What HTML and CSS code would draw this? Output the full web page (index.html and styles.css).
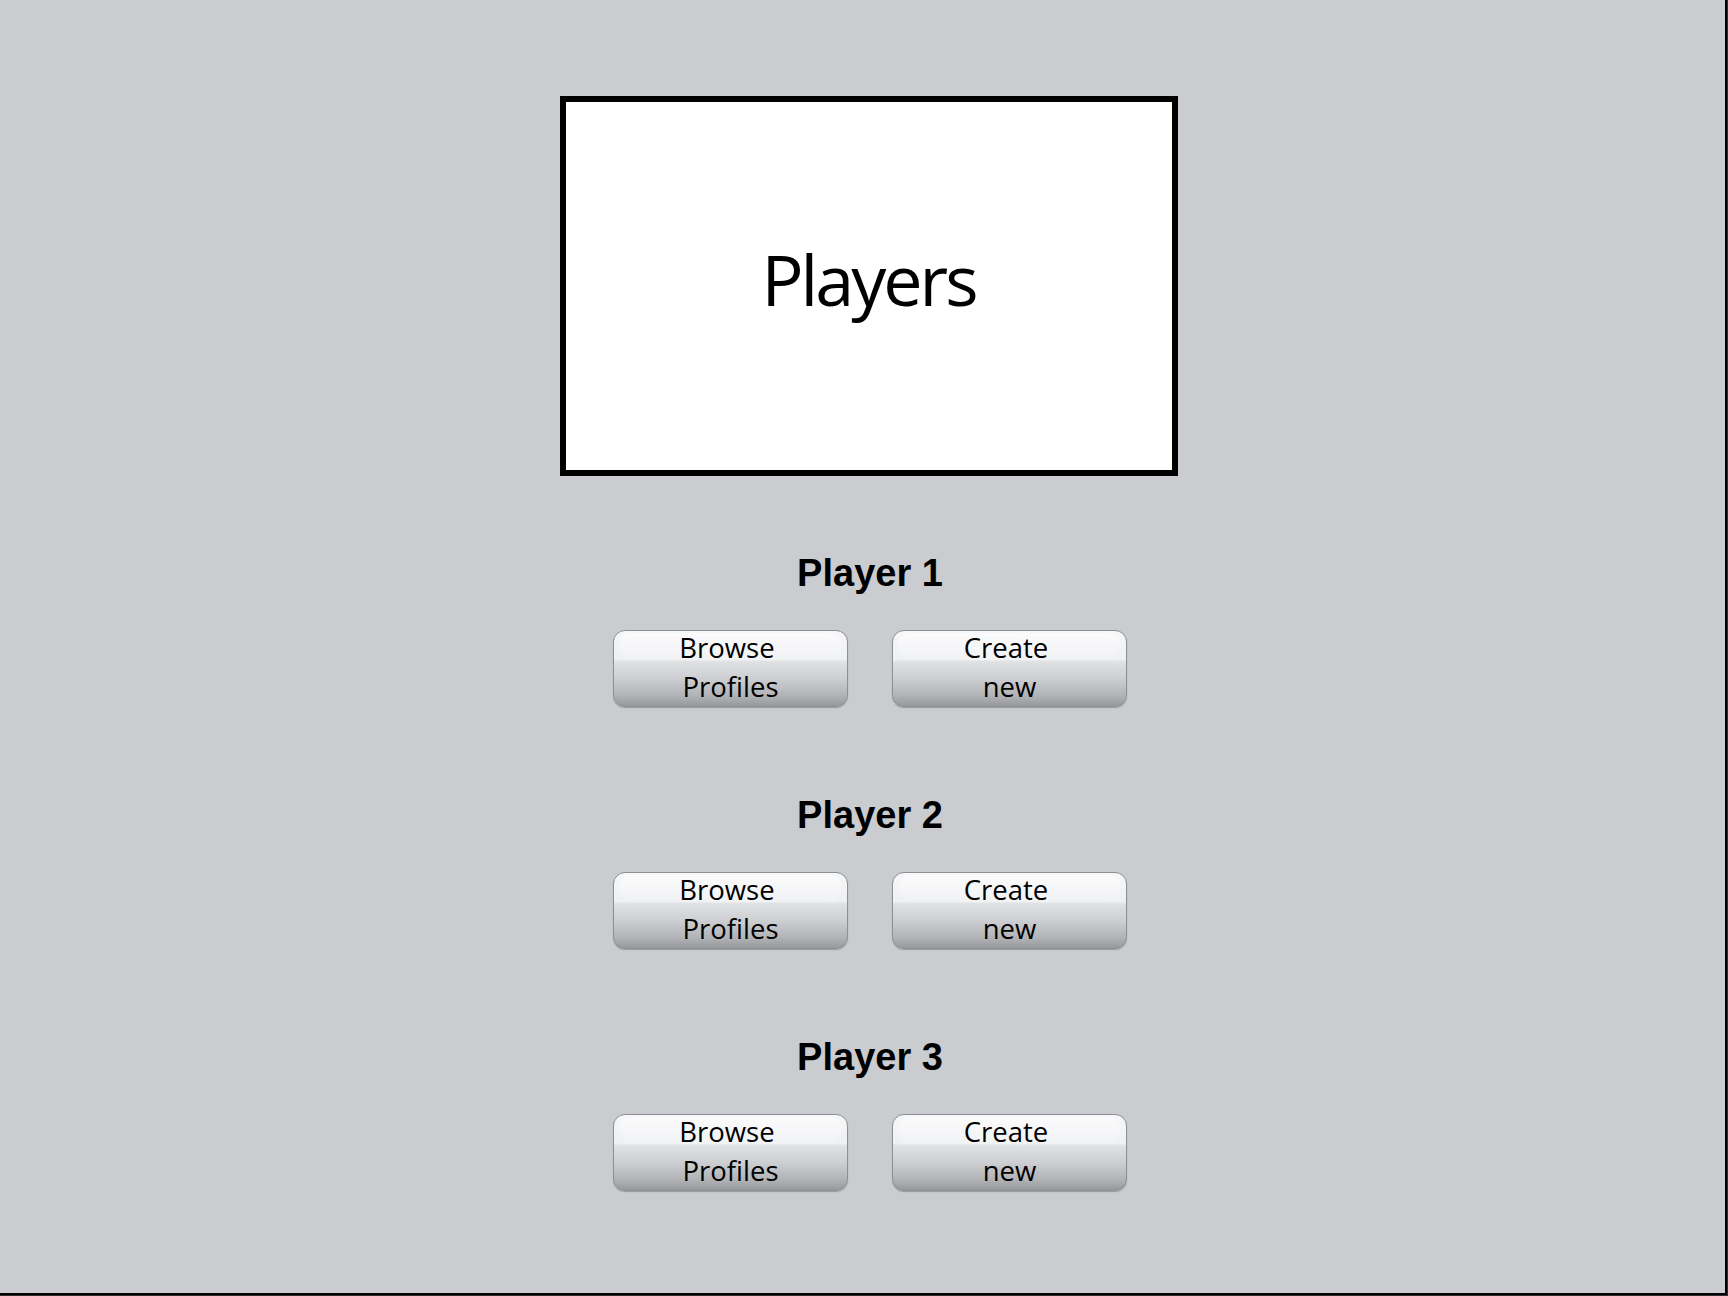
FILE: index.html
```html
<!DOCTYPE html>
<html lang="en">
<head>
<meta charset="utf-8">
<title>Players</title>
<link rel="stylesheet" href="styles.css">
</head>
<body>
<div class="page">
  <div class="title-box"><h1 class="title">Players</h1></div>
  <section class="player">
    <h2 class="player-name">Player 1</h2>
    <div class="actions">
      <button class="gloss-btn"><span class="btn-line">Browse&nbsp;</span><span class="btn-line">Profiles</span></button>
      <button class="gloss-btn"><span class="btn-line">Create&nbsp;</span><span class="btn-line">new</span></button>
    </div>
  </section>
  <section class="player">
    <h2 class="player-name">Player 2</h2>
    <div class="actions">
      <button class="gloss-btn"><span class="btn-line">Browse&nbsp;</span><span class="btn-line">Profiles</span></button>
      <button class="gloss-btn"><span class="btn-line">Create&nbsp;</span><span class="btn-line">new</span></button>
    </div>
  </section>
  <section class="player">
    <h2 class="player-name">Player 3</h2>
    <div class="actions">
      <button class="gloss-btn"><span class="btn-line">Browse&nbsp;</span><span class="btn-line">Profiles</span></button>
      <button class="gloss-btn"><span class="btn-line">Create&nbsp;</span><span class="btn-line">new</span></button>
    </div>
  </section>
</div>
</body>
</html>
```
FILE: styles.css
```css
html {
  margin: 0;
  background: #2e2e2e;
}
body {
  margin: 0;
  width: 1728px;
  height: 1296px;
  overflow: hidden;
}
.page {
  box-sizing: border-box;
  width: 1727px;
  height: 1295px;
  background: #cbcccf;
  border-right: 2px solid #000;
  border-bottom: 2px solid #000;
  padding: 96px 0 0 15px;
  display: flex;
  flex-direction: column;
  align-items: center;
}
.title-box {
  box-sizing: border-box;
  width: 618px;
  height: 380px;
  border: 6px solid #000;
  background: #fff;
  display: flex;
  align-items: center;
  justify-content: center;
  margin-left: -3px;
}
.title {
  margin: 0 0 14px 0;
  font-family: "Open Sans", sans-serif;
  font-weight: 400;
  font-size: 70px;
  line-height: 1;
  letter-spacing: -3px;
  color: #000;
}
.player {
  display: flex;
  flex-direction: column;
  align-items: center;
  margin-top: 79px;
}
.player + .player {
  margin-top: 90px;
}
.player-name {
  margin: 0;
  font-family: "Liberation Sans", Arial, sans-serif;
  font-weight: 700;
  font-size: 38px;
  line-height: 37px;
  color: #000;
}
.actions {
  display: flex;
  gap: 44px;
  margin-top: 38px;
}
.gloss-btn {
  position: relative;
  box-sizing: border-box;
  width: 235px;
  height: 77px;
  padding: 0;
  border: 1px solid #8e8f92;
  border-radius: 12px;
  background: linear-gradient(to bottom, #f6f7f8 0%, #eff0f2 38%, #e0e1e3 41%, #cfd0d3 62%, #b2b3b6 86%, #98999c 100%);
  box-shadow: 0 1px 1px rgba(0, 0, 0, 0.25);
  font-family: "Open Sans", sans-serif;
  font-size: 27.5px;
  color: #000;
  text-align: center;
  display: flex;
  flex-direction: column;
  align-items: stretch;
  justify-content: flex-start;
  gap: 5.5px;
}
.gloss-btn::before {
  content: "";
  position: absolute;
  left: 6px;
  right: 6px;
  top: 2px;
  height: 36%;
  border-radius: 10px 10px 14px 14px;
  background: linear-gradient(to bottom, #fbfbfc, #f1f2f4);
  pointer-events: none;
}
.btn-line {
  position: relative;
  z-index: 1;
  display: block;
  line-height: 33px;
  white-space: nowrap;
}
```
